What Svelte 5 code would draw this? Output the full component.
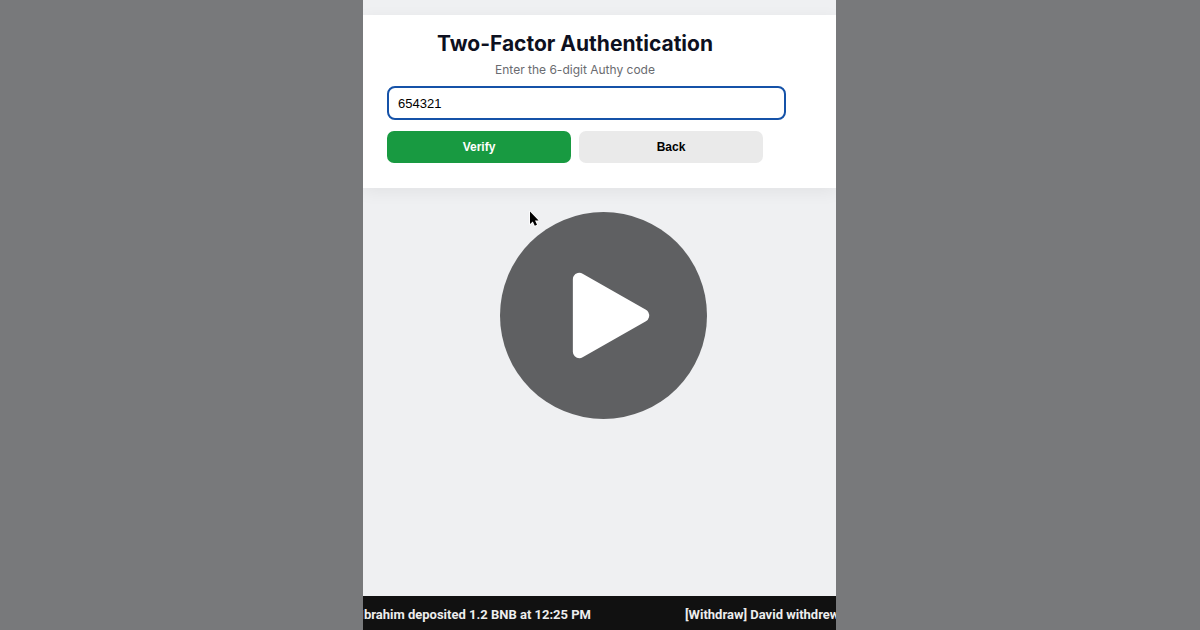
<script>
  let code = $state('654321');
</script>

<div class="page">
  <main class="panel">
    <form class="card" onsubmit={(e) => e.preventDefault()}>
      <h1>Two-Factor Authentication</h1>
      <label for="code">Enter the 6-digit Authy code</label>
      <input id="code" type="text" inputmode="numeric" maxlength="6" bind:value={code} />
      <div class="actions">
        <button class="verify" type="submit">Verify</button>
        <button class="back" type="button">Back</button>
      </div>
    </form>
    <footer class="ticker">
      <span class="event leaving">Ibrahim deposited 1.2 BNB at 12:25 PM</span>
      <span class="event">[Withdraw] David withdrew</span>
    </footer>
  </main>

  <div class="overlay">
    <button class="play" type="button" aria-label="Play">
      <svg viewBox="0 0 206 206" aria-hidden="true">
        <circle cx="103" cy="103" r="103" fill="#5f6062" />
        <path d="M79 67 V139 L142 103 Z" fill="#fff" stroke="#fff" stroke-width="13" stroke-linejoin="round" />
      </svg>
    </button>
  </div>

  <svg class="pointer" viewBox="0 0 12 18" aria-hidden="true">
    <path d="M2 1.5 V14 L4.8 11.4 L6.8 15.8 L9 14.8 L7 10.6 H10.6 Z" fill="#000" stroke="#fff" stroke-width="1.6" paint-order="stroke" stroke-linejoin="round" />
  </svg>
</div>

<style>
  .page {
    position: relative;
    display: grid;
    grid-template-columns: 363fr 473fr 364fr;
    min-height: 100vh;
    overflow: hidden;
    background: #78797b;
    font-family: Roboto, "Liberation Sans", sans-serif;
  }
  .panel {
    grid-column: 2;
    min-width: 0;
    display: flex;
    flex-direction: column;
    overflow: hidden;
    background: #eff0f2;
  }
  .card {
    margin-top: 15px;
    padding: 16px 73px 25px 24px;
    background: #fff;
    box-shadow: 0 4px 16px rgba(0, 0, 0, 0.06);
  }
  h1 {
    margin: 0;
    color: #0d1020;
    font-family: Inter, "Liberation Sans", sans-serif;
    font-size: 21px;
    line-height: 26px;
    font-weight: 650;
    text-align: center;
    white-space: nowrap;
  }
  label {
    display: block;
    margin: 4px 0 7px;
    color: #6a6b70;
    font-family: Inter, "Liberation Sans", sans-serif;
    font-size: 12px;
    line-height: 18px;
    text-align: center;
  }
  input {
    display: block;
    box-sizing: content-box;
    width: 100%;
    height: 30px;
    padding: 0 10px 0 9px;
    border: 2px solid #1552a8;
    border-radius: 8px;
    outline: none;
    background: #fff;
    color: #000;
    font: 13px "Liberation Sans", Arial, sans-serif;
  }
  .actions {
    display: grid;
    grid-template-columns: 1fr 1fr;
    gap: 8px;
    margin-top: 11px;
  }
  .actions button {
    height: 32px;
    padding: 0;
    border: 0;
    border-radius: 7px;
    font: bold 12px "Liberation Sans", Arial, sans-serif;
  }
  .verify {
    background: #189a41;
    color: #fff;
  }
  .back {
    background: #eaeaea;
    color: #000;
  }
  .ticker {
    display: flex;
    gap: 94px;
    margin-top: auto;
    padding: 10px 0 6px;
    overflow: hidden;
    background: #111;
    color: #ededed;
    font-size: 13px;
    line-height: 18px;
    font-weight: 700;
    white-space: nowrap;
  }
  .event {
    flex: none;
  }
  .leaving {
    display: flex;
    justify-content: flex-end;
    width: 228px;
  }
  .overlay {
    position: absolute;
    inset: 0;
    display: grid;
    place-items: center;
    padding-left: 7px;
    pointer-events: none;
  }
  .play {
    width: 207px;
    height: 207px;
    padding: 0;
    border: 0;
    border-radius: 50%;
    background: none;
    pointer-events: auto;
  }
  .play svg {
    display: block;
  }
  .pointer {
    position: absolute;
    top: 210px;
    left: 528px;
    width: 12px;
    height: 18px;
  }
</style>
